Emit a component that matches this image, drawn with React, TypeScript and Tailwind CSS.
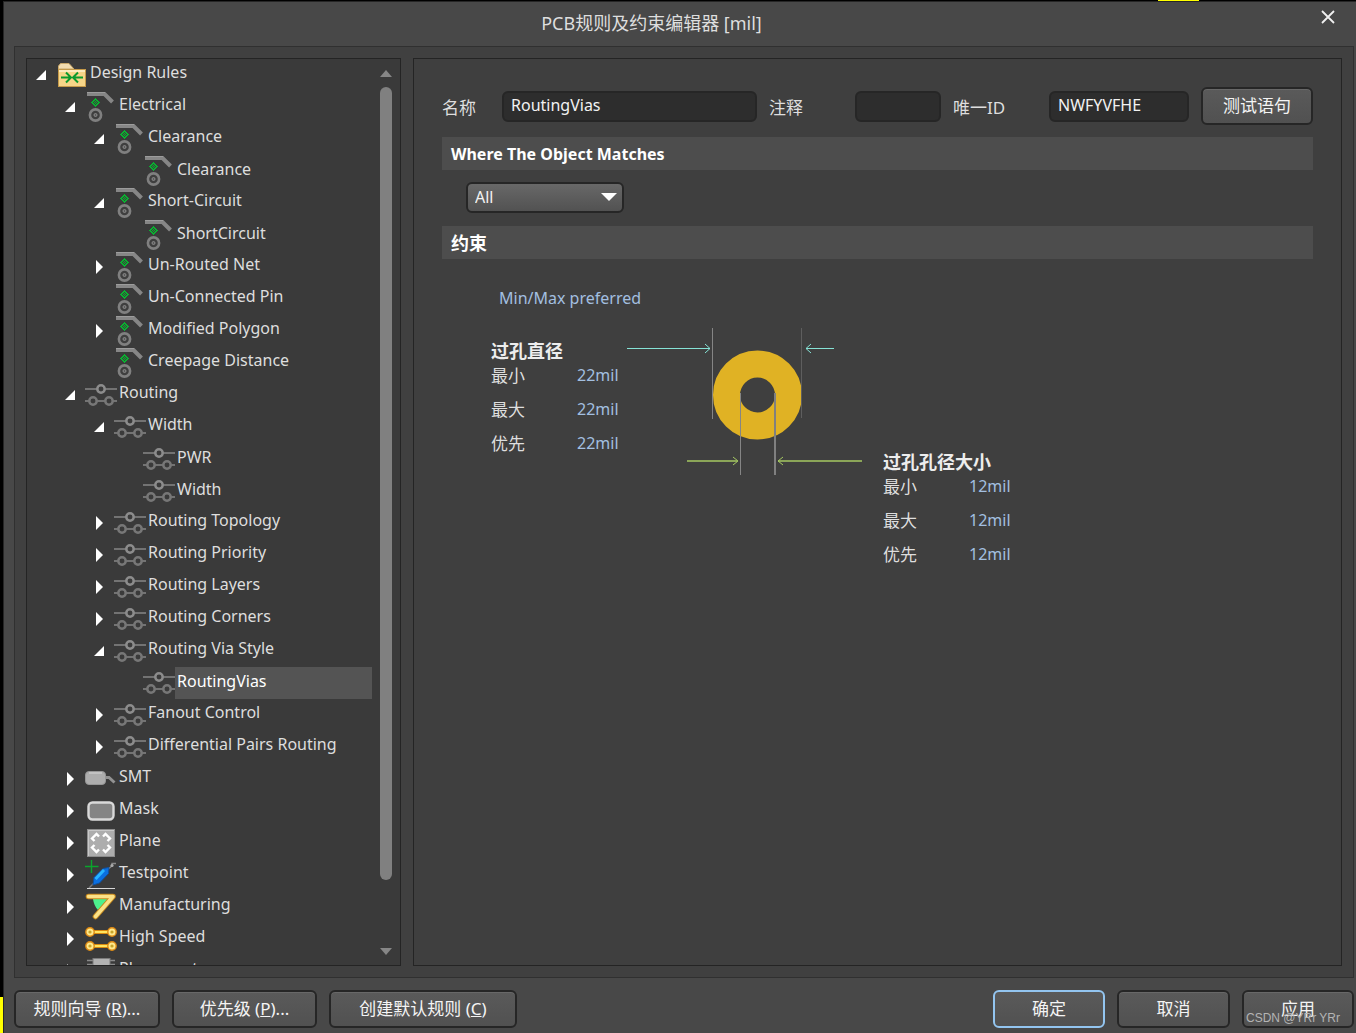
import { useState, type ReactNode } from "react";

type IconKind =
  | "folder"
  | "electrical"
  | "routing"
  | "smt"
  | "mask"
  | "plane"
  | "testpoint"
  | "manufacturing"
  | "highspeed"
  | "placement";

type Node = {
  label: string;
  level: 0 | 1 | 2 | 3;
  icon: IconKind;
  state?: "open" | "closed";
};

const nodes: Node[] = [
  { label: "Design Rules", level: 0, icon: "folder", state: "open" },
  { label: "Electrical", level: 1, icon: "electrical", state: "open" },
  { label: "Clearance", level: 2, icon: "electrical", state: "open" },
  { label: "Clearance", level: 3, icon: "electrical" },
  { label: "Short-Circuit", level: 2, icon: "electrical", state: "open" },
  { label: "ShortCircuit", level: 3, icon: "electrical" },
  { label: "Un-Routed Net", level: 2, icon: "electrical", state: "closed" },
  { label: "Un-Connected Pin", level: 2, icon: "electrical" },
  { label: "Modified Polygon", level: 2, icon: "electrical", state: "closed" },
  { label: "Creepage Distance", level: 2, icon: "electrical" },
  { label: "Routing", level: 1, icon: "routing", state: "open" },
  { label: "Width", level: 2, icon: "routing", state: "open" },
  { label: "PWR", level: 3, icon: "routing" },
  { label: "Width", level: 3, icon: "routing" },
  { label: "Routing Topology", level: 2, icon: "routing", state: "closed" },
  { label: "Routing Priority", level: 2, icon: "routing", state: "closed" },
  { label: "Routing Layers", level: 2, icon: "routing", state: "closed" },
  { label: "Routing Corners", level: 2, icon: "routing", state: "closed" },
  { label: "Routing Via Style", level: 2, icon: "routing", state: "open" },
  { label: "RoutingVias", level: 3, icon: "routing" },
  { label: "Fanout Control", level: 2, icon: "routing", state: "closed" },
  { label: "Differential Pairs Routing", level: 2, icon: "routing", state: "closed" },
  { label: "SMT", level: 1, icon: "smt", state: "closed" },
  { label: "Mask", level: 1, icon: "mask", state: "closed" },
  { label: "Plane", level: 1, icon: "plane", state: "closed" },
  { label: "Testpoint", level: 1, icon: "testpoint", state: "closed" },
  { label: "Manufacturing", level: 1, icon: "manufacturing", state: "closed" },
  { label: "High Speed", level: 1, icon: "highspeed", state: "closed" },
  { label: "Placement", level: 1, icon: "placement", state: "closed" },
];

const indent = {
  0: "pl-[9px]",
  1: "pl-[38px]",
  2: "pl-[67px]",
  3: "pl-[96px]",
};

/* Checkered diamond of single green pixels used by the electrical icon. */
const dots: [number, number][] = [];
for (let y = -4; y <= 4; y++)
  for (let x = -4; x <= 4; x++) {
    const d = Math.abs(x) + Math.abs(y);
    if (d <= 4 && (d % 2 === 1 || d === 4)) dots.push([x, y]);
  }

function Glyph({ kind }: { kind: IconKind }) {
  switch (kind) {
    case "folder":
      return (
        <>
          <path d="M2.5 10V7L4.5 4.5H13L18 10Z" fill="#f3ddb0" stroke="#c9a86a" />
          <rect x="2.5" y="10.5" width="27" height="17" fill="#f6d588" stroke="#c59a4a" />
          <path d="M3 12H29" stroke="#fdebbd" strokeWidth="2" />
          <path
            d="M5 18.5H14.5M10 13.5L15 18.5L10 23.5M27 18.5H17.5M22 13.5L17 18.5L22 23.5"
            fill="none"
            stroke="#0a9a2c"
            strokeWidth="2"
          />
        </>
      );
    case "electrical":
      return (
        <>
          <path d="M2 3H19.5L27.5 11" fill="none" stroke="#868686" strokeWidth="4" />
          <path d="M2 1.5H20" stroke="#9c9c9c" strokeWidth="1" />
          <g shapeRendering="crispEdges">
            {dots.map(([x, y]) => (
              <rect key={x + "," + y} x={10 + x} y={11 + y} width="1" height="1" fill="#07b52f" />
            ))}
          </g>
          <circle cx="10.5" cy="24" r="5.6" fill="#3f3f3f" stroke="#808080" strokeWidth="2.6" />
          <circle cx="10.5" cy="24" r="1.5" fill="#5a5a5a" stroke="#8c8c8c" strokeWidth="1" />
        </>
      );
    case "routing":
      return (
        <g fill="#3a3a3a" stroke="#868686">
          <path d="M0 10H32M0 22H32" strokeWidth="1.6" />
          <circle cx="16" cy="10" r="3.7" strokeWidth="2.5" stroke="#8c8c8c" />
          <circle cx="8" cy="22" r="3.7" strokeWidth="2.5" stroke="#777" />
          <circle cx="24" cy="22" r="3.7" strokeWidth="2.5" stroke="#777" />
        </g>
      );
    case "smt":
      return (
        <>
          <path d="M19 14.5H24L29.5 19.5" fill="none" stroke="#929292" strokeWidth="3" />
          <rect x="0.5" y="8.5" width="20" height="13" rx="3.5" fill="#adadad" stroke="#969696" />
          <path d="M4 10H17" stroke="#c2c2c2" strokeWidth="2" />
        </>
      );
    case "mask":
      return (
        <rect x="3.5" y="7.5" width="25" height="17" rx="4" fill="#848484" stroke="#d9d9d9" strokeWidth="2.4" />
      );
    case "plane":
      return (
        <>
          <rect x="2.5" y="2.5" width="27" height="27" fill="#adadad" stroke="#8d8d8d" />
          <path d="M3.500 29V3.500H29" fill="none" stroke="#c8c8c8" />
          <path
            d="M14 9.5L11.5 7L7 11.5L9.5 14M18 9.5L20.5 7L25 11.5L22.5 14M14 22.5L11.5 25L7 20.5L9.5 18M18 22.5L20.5 25L25 20.5L22.5 18"
            fill="none"
            stroke="#fff"
            strokeWidth="2.4"
          />
        </>
      );
    case "testpoint":
      return (
        <>
          <path d="M10 23L4 29" stroke="#777" strokeWidth="1.4" />
          <path d="M22 11L27 7V4.5H31" fill="none" stroke="#8a8a8a" strokeWidth="1.4" />
          <circle cx="27" cy="6.5" r="1.6" fill="#aaa" />
          <path d="M8 26L9 18.5L18 9.5L24 8.5L23.5 14.5L14.5 24Z" fill="#0a6fe0" stroke="#0f4f9e" />
          <path d="M10.5 20L19 11" stroke="#27b4ff" strokeWidth="3" />
          <path d="M0 7.5H13.5M6.5 1V14" stroke="#0aa52c" strokeWidth="1.4" />
          <path d="M2 29.5H30" stroke="#d8d8d8" />
        </>
      );
    case "manufacturing":
      return (
        <>
          <path d="M8 8H23L13 19Q9 15 8 8Z" fill="#4df08d" />
          <g fill="none" strokeLinecap="round" strokeLinejoin="round">
            <path d="M3.5 5.5H28L10.5 25.5" stroke="#c98a1e" strokeWidth="5.6" />
            <path d="M3.5 5.5H28L10.5 25.5" stroke="#fbe187" strokeWidth="3.6" />
          </g>
        </>
      );
    case "highspeed":
      return (
        <>
          <path d="M5 9H27M5 23H27" stroke="#d98a10" strokeWidth="4" />
          <path d="M5 9H27M5 23H27" stroke="#ffe45e" strokeWidth="2" />
          {[9, 23].map((y) =>
            [5, 27].map((x) => (
              <g key={x + "," + y}>
                <circle cx={x} cy={y} r="4.2" fill="#ffe98c" stroke="#dd8a14" strokeWidth="1.4" />
                <circle cx={x} cy={y} r="1.6" fill="#c9a52a" />
              </g>
            )),
          )}
        </>
      );
    case "placement":
      return (
        <>
          <path d="M2 5.5H30M2 9.5H30M2 15.5H30M2 20.5H30" stroke="#8a8a8a" strokeWidth="1.6" />
          <rect x="8" y="3.5" width="17" height="24" fill="#b2b2b2" stroke="#7c7c7c" />
        </>
      );
  }
}

function TreeIcon({ kind }: { kind: IconKind }) {
  return (
    <svg viewBox="0 0 32 32" className="size-8 shrink-0" aria-hidden="true">
      <Glyph kind={kind} />
    </svg>
  );
}

function Expander({ state, label, onClick }: { state?: "open" | "closed"; label: string; onClick: () => void }) {
  if (!state) return <span className="w-2.5 shrink-0" />;
  return (
    <button type="button" aria-label={label} onClick={onClick} className="w-2.5 shrink-0">
      <svg viewBox="0 0 10 14" className="h-3.5 w-2.5" fill="#fff" aria-hidden="true">
        {state === "open" ? <path d="M10 2V12H0Z" /> : <path d="M2 0L9 7L2 14Z" />}
      </svg>
    </button>
  );
}

function TreeRow({ node, selected, onSelect }: { node: Node; selected: boolean; onSelect: () => void }) {
  return (
    <li
      role="treeitem"
      aria-level={node.level + 1}
      aria-selected={selected}
      className={"flex h-8 items-center " + indent[node.level]}
    >
      <Expander state={node.state} label={"Toggle " + node.label} onClick={onSelect} />
      <span className="ml-2.5 flex">
        <TreeIcon kind={node.icon} />
      </span>
      <button
        type="button"
        onClick={onSelect}
        className={
          "h-8 flex-1 whitespace-nowrap pl-0.5 text-left " +
          (node.level === 3 ? "pb-1 " : "pb-1.5 ") +
          (selected ? "bg-[#545454] text-white" : "text-[#dedede]")
        }
      >
        {node.label}
      </button>
    </li>
  );
}

function PushButton({ children, width, primary }: { children: ReactNode; width: string; primary?: boolean }) {
  return (
    <button
      type="button"
      className={
        "h-[38px] shrink-0 rounded-md border-2 bg-linear-to-b from-[#5a5a5a] to-[#515151] text-[17px] text-[#f4f4f4] " +
        (primary ? "border-[#93c5f0] " : "border-[#262626] shadow-[inset_0_1px_0_#686868] ") +
        width
      }
    >
      {children}
    </button>
  );
}

const field =
  "h-[31px] rounded-md border-2 border-[#262626] bg-[#2d2d2d] px-[7px] pb-0.5 text-[#f2f2f2] outline-none";

function SectionTitle({ children }: { children: ReactNode }) {
  return <h2 className="flex h-[33px] items-center bg-[#4d4d4d] px-[9px] font-bold text-white">{children}</h2>;
}

function Limits({ id, title, value }: { id: string; title: string; value: string }) {
  return (
    <fieldset>
      <legend className="text-lg leading-6 font-bold text-[#ededed]">{title}</legend>
      <div className="flex flex-col gap-2.5">
        {["最小", "最大", "优先"].map((name, i) => (
          <div key={name} className="flex h-6 items-center">
            <label htmlFor={id + i} className="w-[86px] pt-0.5 text-[17px]">
              {name}
            </label>
            <input id={id + i} defaultValue={value} className="h-6 w-[49px] bg-transparent text-[#a3bfe0] outline-none" />
          </div>
        ))}
      </div>
    </fieldset>
  );
}

function ViaDrawing() {
  return (
    <svg viewBox="0 0 237 148" className="h-[148px] w-[237px] shrink-0" role="img" aria-label="Via size">
      <circle cx="131.5" cy="67" r="31" fill="none" stroke="#e0b224" strokeWidth="27" />
      <path d="M86.5 0V91" stroke="#858585" />
      <path d="M175.5 0V90" stroke="#5e5e5e" />
      <path d="M114.5 65V147" stroke="#858585" />
      <path d="M149 65V147" stroke="#808080" strokeWidth="2" />
      <g fill="none" stroke="#86e3d6" strokeWidth="1">
        <path d="M1 20.5H84M79 16L84 20.5L79 25" />
        <path d="M208 20.5H180M185 16L180 20.5L185 25" />
      </g>
      <g fill="none" stroke="#a5c862">
        <path d="M61 133H111M152 133H236" strokeWidth="1.6" />
        <path d="M107 129L112 133L107 137M157 129L152 133L157 137" />
      </g>
    </svg>
  );
}

export default function App() {
  const [selected, setSelected] = useState(19);
  return (
    <div className="relative flex h-screen bg-black pt-px font-['Noto_Sans','Noto_Sans_CJK_SC',sans-serif] text-base text-[#dedede]">
      <div className="absolute top-0 left-[1158px] h-px w-[41px] bg-[#ffff00]" />
      <div className="flex w-[3px] shrink-0 flex-col justify-end">
        <div className="h-9 bg-[#ffff00]" />
      </div>

      <main className="flex min-w-0 flex-1 flex-col border-t border-l border-[#262626] bg-[#484848]">
        <header className="flex h-11 shrink-0 items-center">
          <h1 className="flex-1 pb-0.5 text-center text-lg">PCB规则及约束编辑器 [mil]</h1>
          <button type="button" aria-label="Close" className="flex h-8 w-[57px] justify-center self-start pt-2">
            <svg viewBox="0 0 14 14" className="size-3.5" stroke="#f0f0f0" strokeWidth="1.8" aria-hidden="true">
              <path d="M1 1L13 13M13 1L1 13" />
            </svg>
          </button>
        </header>

        <div className="mr-0.5 ml-2.5 flex min-h-0 flex-1 gap-3 border border-[#303030] bg-[#404040] p-[11px]">
          <nav className="flex w-[375px] shrink-0 overflow-hidden border border-[#242424] bg-[#3a3a3a]">
            <ul role="tree" aria-label="Design Rules" className="min-w-0 flex-1">
              {nodes.map((n, i) => (
                <TreeRow key={i} node={n} selected={i === selected} onSelect={() => setSelected(i)} />
              ))}
            </ul>
            <div className="flex w-7 flex-col items-center pt-[11px] pb-2.5">
              <svg viewBox="0 0 12 7" className="h-[7px] w-3" fill="#868686" aria-hidden="true">
                <path d="M0 7L6 0L12 7Z" />
              </svg>
              <div className="mt-2.5 mb-[68px] w-3 flex-1 rounded-full bg-[#808080]" />
              <svg viewBox="0 0 12 7" className="h-[7px] w-3" fill="#868686" aria-hidden="true">
                <path d="M0 0L6 7L12 0Z" />
              </svg>
            </div>
          </nav>

          <section className="min-w-0 flex-1 border border-[#242424] bg-[#3f3f3f] p-7">
            <div className="flex items-center gap-3">
              <label htmlFor="name" className="w-12 pt-1 text-[17px]">
                名称
              </label>
              <input id="name" defaultValue="RoutingVias" className={field + " min-w-0 flex-1"} />
              <label htmlFor="comment" className="w-[74px] pt-1 text-[17px]">
                注释
              </label>
              <input id="comment" className={field + " w-[86px]"} />
              <label htmlFor="uid" className="w-[84px] pt-1 text-[17px]">
                唯一ID
              </label>
              <input id="uid" defaultValue="NWFYVFHE" className={field + " w-[140px]"} />
              <PushButton width="w-28">测试语句</PushButton>
            </div>

            <div className="mt-3">
              <SectionTitle>Where The Object Matches</SectionTitle>
            </div>
            <div className="relative mt-3 ml-6 h-8 w-[158px]">
              <select
                aria-label="Where The Object Matches"
                className="h-[31px] w-full appearance-none rounded-md border-2 border-[#262626] bg-linear-to-b from-[#686868] to-[#525252] px-[7px] pb-0.5 text-[#f2f2f2] outline-none"
              >
                <option>All</option>
              </select>
              <svg
                viewBox="0 0 16 8"
                className="pointer-events-none absolute top-[11px] right-[7px] h-2 w-4"
                fill="#fff"
                aria-hidden="true"
              >
                <path d="M0 0H16L8 8Z" />
              </svg>
            </div>
            <div className="mt-3 text-lg">
              <SectionTitle>约束</SectionTitle>
            </div>

            <p className="mt-[27px] ml-[57px] leading-6 text-[#a3bfe0]">Min/Max preferred</p>
            <div className="mt-[18px] ml-[49px] flex items-start">
              <div className="mt-[11px]">
                <Limits id="diameter" title="过孔直径" value="22mil" />
              </div>
              <ViaDrawing />
              <div className="mt-[122px] ml-5">
                <Limits id="hole" title="过孔孔径大小" value="12mil" />
              </div>
            </div>
          </section>
        </div>

        <footer className="mt-3 mr-0.5 mb-[5px] ml-2.5 flex shrink-0 gap-3">
          <PushButton width="w-[146px]">
            规则向导 (<u>R</u>)...
          </PushButton>
          <PushButton width="w-[145px]">
            优先级 (<u>P</u>)...
          </PushButton>
          <PushButton width="w-[188px]">
            创建默认规则 (<u>C</u>)
          </PushButton>
          <div className="ml-auto flex gap-3">
            <PushButton width="w-28" primary>
              确定
            </PushButton>
            <PushButton width="w-[113px]">取消</PushButton>
            <PushButton width="w-28">应用</PushButton>
          </div>
        </footer>
      </main>

      <span className="pointer-events-none absolute right-4 bottom-[7px] font-['Liberation_Sans',sans-serif] text-xs leading-4 text-[#b4b4b4]">
        CSDN @YRr YRr
      </span>
    </div>
  );
}
